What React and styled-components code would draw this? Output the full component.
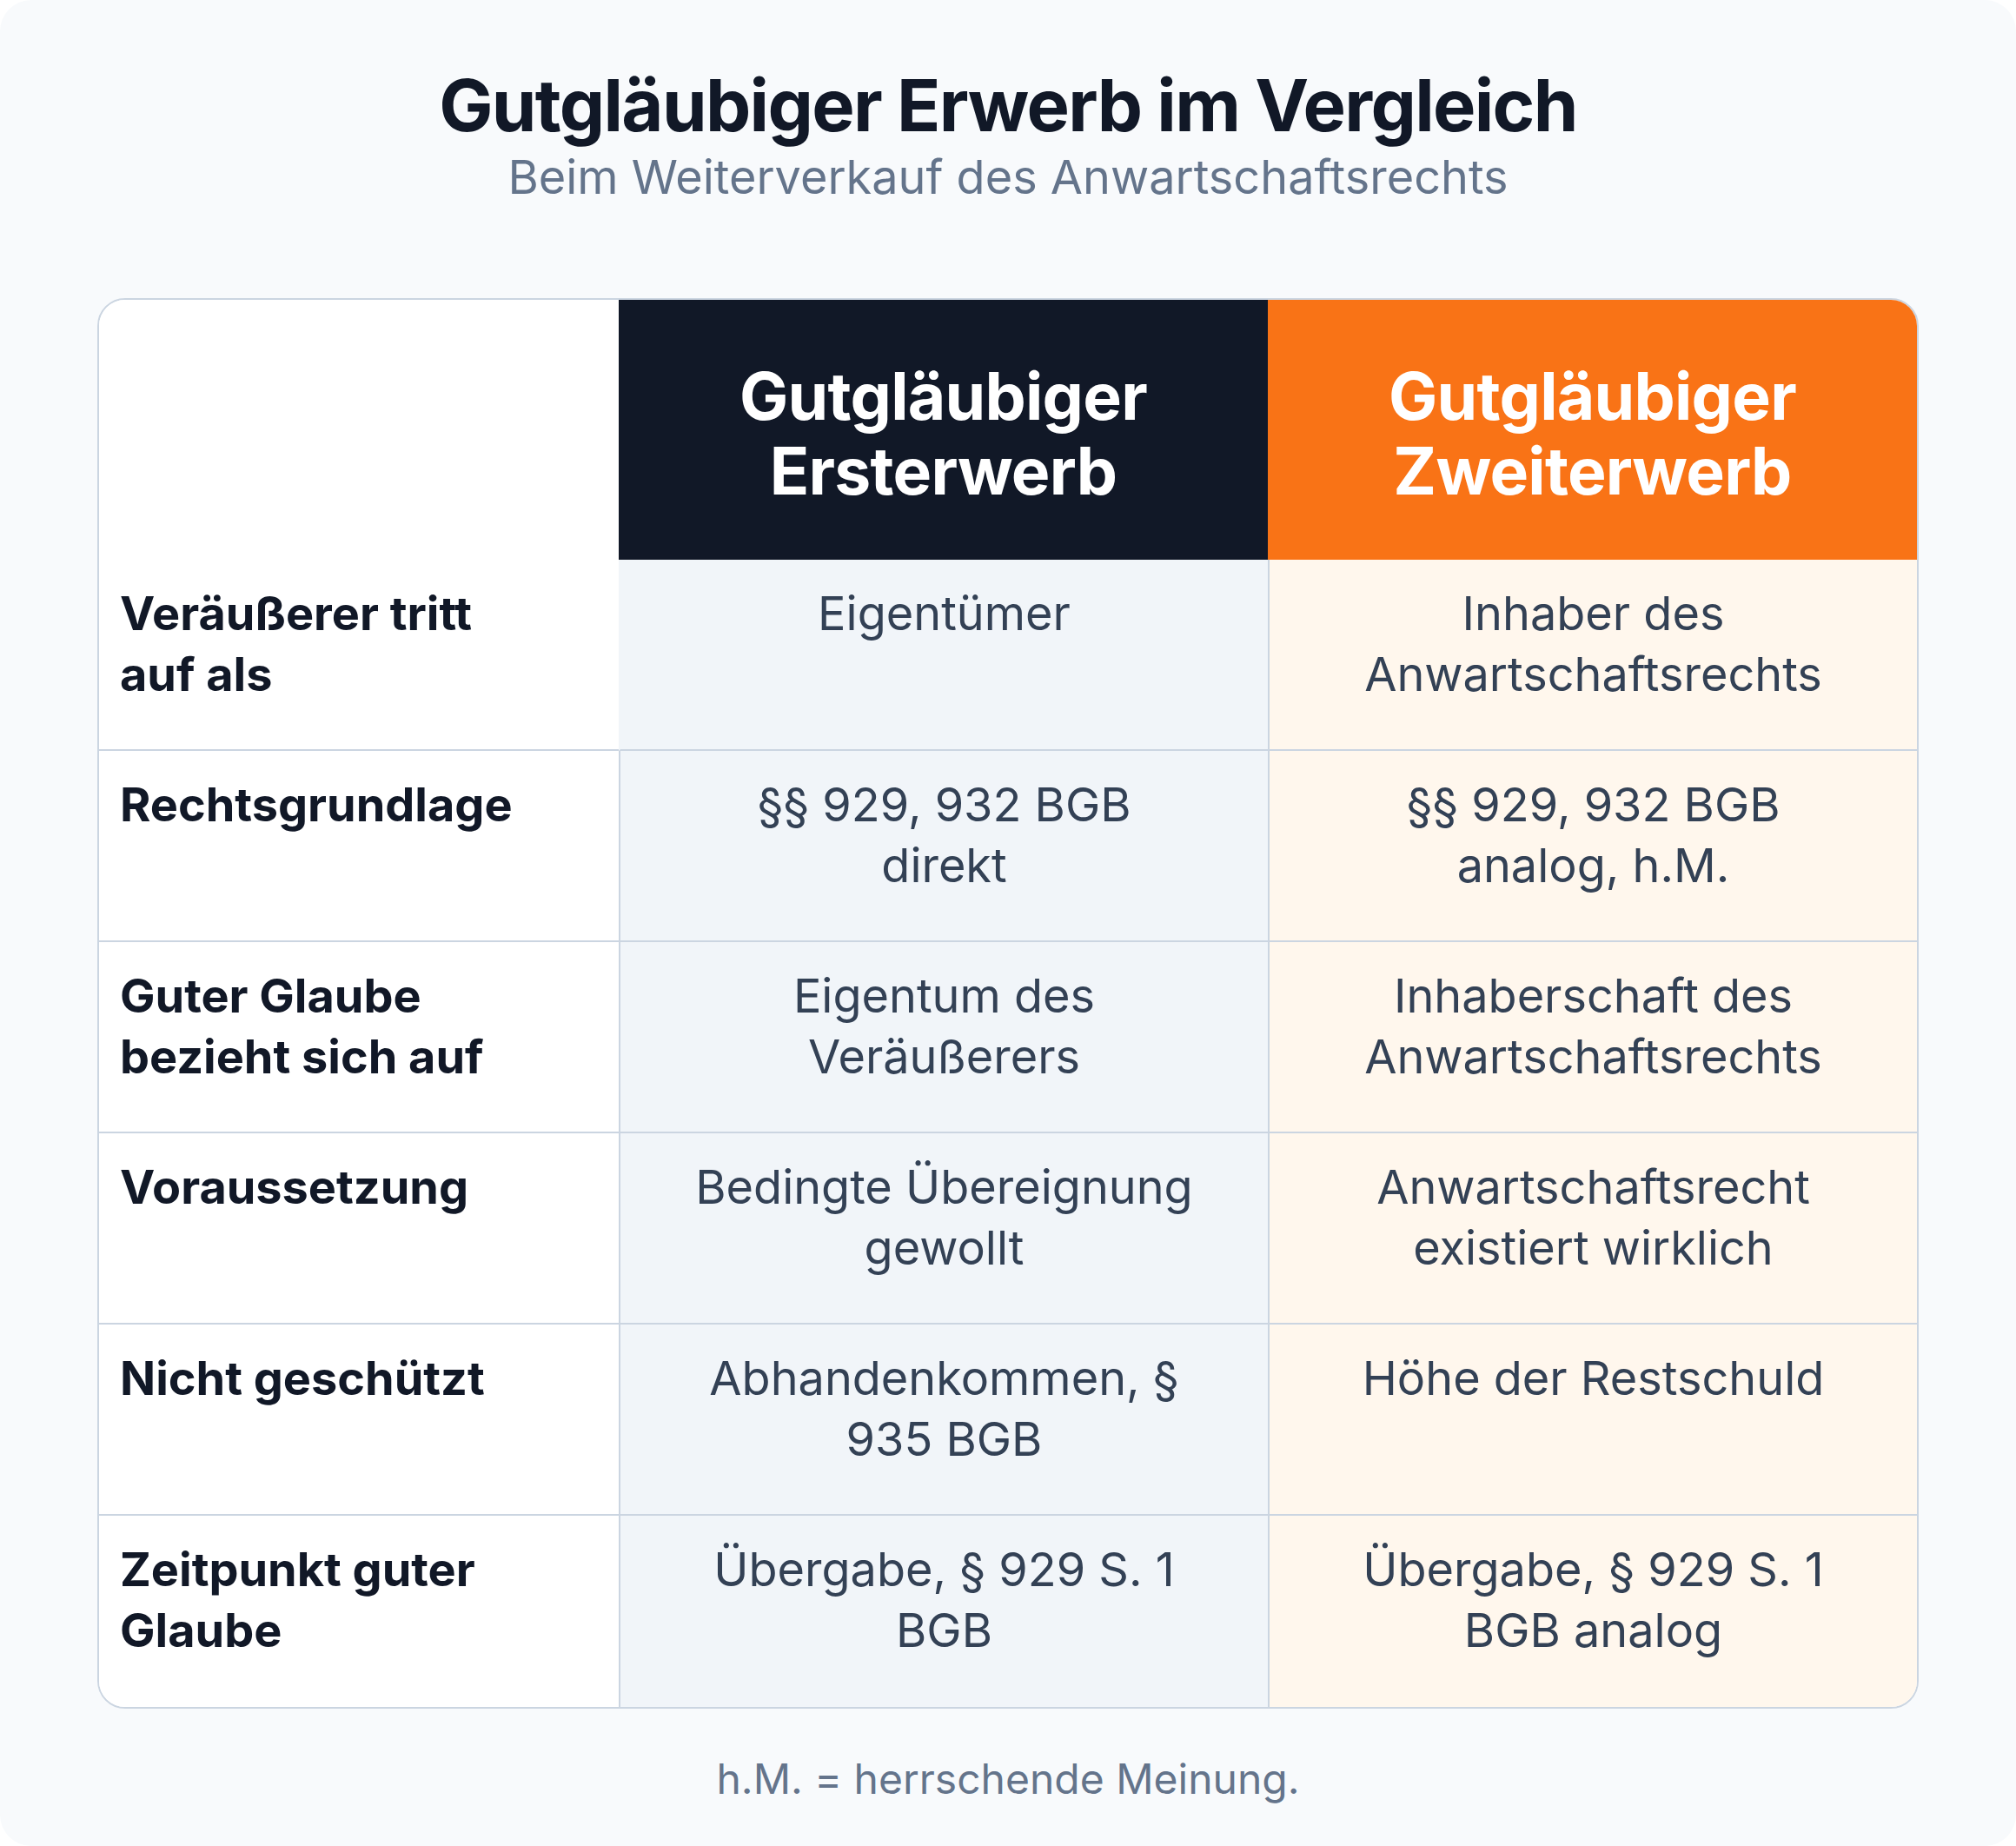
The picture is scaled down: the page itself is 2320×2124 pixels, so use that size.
import React from "react";
import styled, { createGlobalStyle } from "styled-components";

const GlobalStyle = createGlobalStyle`
  * { box-sizing: border-box; }
  body {
    margin: 0;
    background: #ffffff;
    font-family: Inter, "Noto Sans", "Liberation Sans", sans-serif;
  }
`;

const Page = styled.div`
  width: 2320px;
  min-height: 2124px;
  background: #f8fafc;
  border-radius: 36px;
  padding: 71px 112px 0;
  display: flex;
  flex-direction: column;
  align-items: center;
`;

const Title = styled.h1`
  margin: 0;
  font-size: 83px;
  line-height: 100px;
  font-weight: 700;
  letter-spacing: -0.02em;
  color: #111827;
  text-align: center;
`;

const Subtitle = styled.p`
  margin: 1px 0 0;
  font-size: 54px;
  line-height: 64px;
  color: #64748b;
  text-align: center;
`;

const Table = styled.div`
  margin-top: 107px;
  width: 100%;
  display: grid;
  grid-template-columns: 598px 1fr 1fr;
  grid-template-rows: 299px repeat(6, 220px);
  border: 2px solid #cbd5e1;
  border-radius: 32px;
  overflow: hidden;
  background: #ffffff;
`;

const HeadCell = styled.div`
  display: flex;
  align-items: center;
  justify-content: center;
  text-align: center;
  padding: 8px 40px 0;
  background: ${(p) => p.$bg};
  color: #ffffff;
  font-size: 75px;
  line-height: 86px;
  font-weight: 700;
  letter-spacing: -0.01em;
  white-space: pre-line;
`;

const Corner = styled.div`
  background: #ffffff;
`;

const Label = styled.div`
  padding: 27px 24px 20px;
  font-size: 54px;
  line-height: 70px;
  font-weight: 700;
  color: #111827;
  white-space: pre-line;
  background: #ffffff;
  border-bottom: ${(p) => (p.$last ? "none" : "2px solid #cbd5e1")};
`;

const Cell = styled.div`
  padding: 27px 24px 20px;
  font-size: 54px;
  line-height: 70px;
  color: #334155;
  text-align: center;
  white-space: pre-line;
  background: ${(p) => p.$bg};
  border-left: ${(p) => (p.$open ? "2px solid transparent" : "2px solid #cbd5e1")};
  border-bottom: ${(p) => (p.$last ? "none" : "2px solid #cbd5e1")};
`;

const Footnote = styled.p`
  margin: 52px 0 0;
  font-size: 48px;
  line-height: 58px;
  color: #64748b;
  text-align: center;
`;

const rows = [
  ["Veräußerer tritt\nauf als", "Eigentümer", "Inhaber des\nAnwartschaftsrechts"],
  ["Rechtsgrundlage", "§§ 929, 932 BGB\ndirekt", "§§ 929, 932 BGB\nanalog, h.M."],
  ["Guter Glaube\nbezieht sich auf", "Eigentum des\nVeräußerers", "Inhaberschaft des\nAnwartschaftsrechts"],
  ["Voraussetzung", "Bedingte Übereignung\ngewollt", "Anwartschaftsrecht\nexistiert wirklich"],
  ["Nicht geschützt", "Abhandenkommen, §\n935 BGB", "Höhe der Restschuld"],
  ["Zeitpunkt guter\nGlaube", "Übergabe, § 929 S. 1\nBGB", "Übergabe, § 929 S. 1\nBGB analog"],
];

export default function App() {
  return (
    <>
      <GlobalStyle />
      <Page>
        <Title>Gutgläubiger Erwerb im Vergleich</Title>
        <Subtitle>Beim Weiterverkauf des Anwartschaftsrechts</Subtitle>
        <Table>
          <Corner />
          <HeadCell $bg="#111827">{"Gutgläubiger\nErsterwerb"}</HeadCell>
          <HeadCell $bg="#f97316">{"Gutgläubiger\nZweiterwerb"}</HeadCell>
          {rows.map(([label, first, second], i) => {
            const last = i === rows.length - 1;
            return (
              <React.Fragment key={label}>
                <Label $last={last}>{label}</Label>
                <Cell $bg="#f1f5f9" $last={last} $open={i === 0}>
                  {first}
                </Cell>
                <Cell $bg="#fff7ed" $last={last}>{second}</Cell>
              </React.Fragment>
            );
          })}
        </Table>
        <Footnote>h.M. = herrschende Meinung.</Footnote>
      </Page>
    </>
  );
}
